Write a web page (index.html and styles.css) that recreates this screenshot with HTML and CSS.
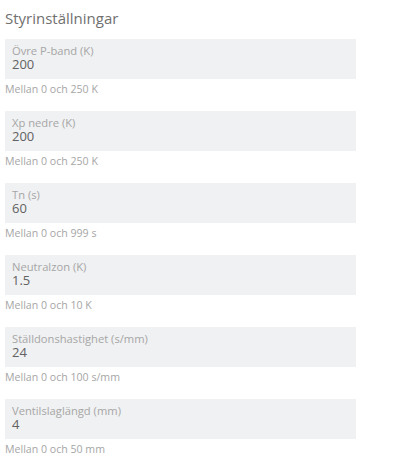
FILE: index.html
```html
<!DOCTYPE html>
<html lang="sv">
<head>
<meta charset="utf-8">
<link rel="stylesheet" href="styles.css">
</head>
<body>
<div class="page">
  <h2 class="title">Styrinställningar</h2>
  <div class="field">
    <div class="box"><div class="label">Övre P-band (K)</div><div class="value">200</div></div>
    <div class="help">Mellan 0 och 250 K</div>
  </div>
  <div class="field">
    <div class="box"><div class="label">Xp nedre (K)</div><div class="value">200</div></div>
    <div class="help">Mellan 0 och 250 K</div>
  </div>
  <div class="field">
    <div class="box"><div class="label">Tn (s)</div><div class="value">60</div></div>
    <div class="help">Mellan 0 och 999 s</div>
  </div>
  <div class="field">
    <div class="box"><div class="label">Neutralzon (K)</div><div class="value">1.5</div></div>
    <div class="help">Mellan 0 och 10 K</div>
  </div>
  <div class="field">
    <div class="box"><div class="label">Ställdonshastighet (s/mm)</div><div class="value">24</div></div>
    <div class="help">Mellan 0 och 100 s/mm</div>
  </div>
  <div class="field">
    <div class="box"><div class="label">Ventilslaglängd (mm)</div><div class="value">4</div></div>
    <div class="help">Mellan 0 och 50 mm</div>
  </div>
</div>
</body>
</html>
```
FILE: styles.css
```css
html, body {
  margin: 0;
  padding: 0;
  background: #ffffff;
}
.page {
  padding: 8px 5px 0 5px;
  font-family: "Open Sans", "Noto Sans", sans-serif;
}
.title {
  margin: 0 0 11px 0;
  font-size: 15px;
  line-height: 20px;
  font-weight: 400;
  color: #707070;
}
.field {
  width: 351px;
  margin-bottom: 14px;
}
.box {
  box-sizing: border-box;
  height: 40px;
  background: #f0f1f2;
  padding: 5px 7px 0 7px;
}
.label {
  font-size: 11.2px;
  line-height: 13px;
  color: #a6a6a6;
}
.value {
  font-size: 13px;
  line-height: 14px;
  color: #626262;
}
.help {
  margin-top: 3px;
  font-size: 10.6px;
  line-height: 15px;
  color: #a6a6a6;
}
```
